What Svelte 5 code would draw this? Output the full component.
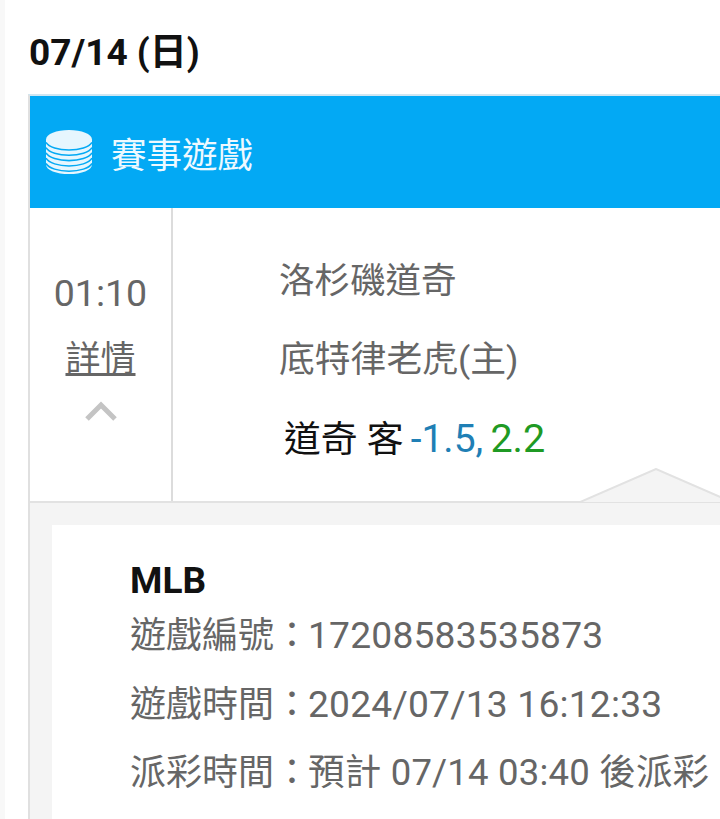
<script>
	const info = [
		{ label: '遊戲編號', value: '17208583535873', wide: true },
		{ label: '遊戲時間', value: '2024/07/13 16:12:33', wide: true },
		{ label: '派彩時間', value: '預計 07/14 03:40 後派彩', wide: false }
	];
</script>

<div class="page">
	<h2 class="date">07/14 (日)</h2>

	<section class="card">
		<header class="card-head">
			<svg class="coins" width="48" height="46" viewBox="0 0 50 48">
				<path d="M1 11C1 5 12 1 25 1s24 4 24 10v26c0 6-11 10-24 10S1 43 1 37z" fill="#e6f6fe" />
				<g fill="none" stroke="#03a9f4" stroke-width="1.6">
					<path d="M1 14c3 5 13 8 24 8s21-3 24-8" />
					<path d="M1 19.500c3 5 13 8 24 8s21-3 24-8" />
					<path d="M1 25c3 5 13 8 24 8s21-3 24-8" />
					<path d="M1 30.500c3 5 13 8 24 8s21-3 24-8" />
					<path d="M1 36c3 5 13 8 24 8s21-3 24-8" />
				</g>
			</svg>
			<span class="card-title">賽事遊戲</span>
		</header>

		<div class="match">
			<div class="side">
				<div class="time">01:10</div>
				<a class="details" href="#details">詳情</a>
				<svg class="chevron" width="32" height="20" viewBox="0 0 32 20">
					<path d="M2 18 16 4l14 14" fill="none" stroke="#c4c4c4" stroke-width="5" />
				</svg>
			</div>
			<div class="teams">
				<div class="team">洛杉磯道奇</div>
				<div class="team name-wide">底特律老虎(主)</div>
				<div class="bet">道奇 客 <span class="line">-1.5,</span> <span class="odds">2.2</span></div>
			</div>
			<svg class="notch" width="152" height="35" viewBox="0 0 152 35">
				<path d="M0 34 76 1l76 33" fill="#f4f4f4" stroke="#e2e2e2" stroke-width="2" />
			</svg>
		</div>

		<div class="panel">
			<div class="panel-body">
				<div class="league">MLB</div>
				{#each info as row}
					<div class="row">{row.label}：<span class:wide={row.wide}>{row.value}</span></div>
				{/each}
			</div>
		</div>
	</section>
</div>

<style>
	:global(body) {
		margin: 0;
		background: #fff;
	}

	.page {
		height: 819px;
		overflow: hidden;
		padding: 29px 0 0 23px;
		border-left: 5px solid #f8f8f8;
		box-sizing: border-box;
		font-family: Roboto, 'Noto Sans CJK TC', sans-serif;
	}

	.date {
		margin: 0 0 17px 1px;
		font-size: 37px;
		line-height: 48px;
		font-weight: 700;
		color: #111;
	}

	.card {
		width: 720px;
		border-left: 2px solid #e0e0e0;
		border-top: 2px solid #cfe6f2;
	}

	.card-head {
		display: flex;
		align-items: center;
		height: 112px;
		padding-left: 15px;
		background: #03a9f4;
	}

	.coins {
		flex: none;
	}

	.card-title {
		margin-left: 18px;
		font-size: 35.500px;
		color: #eef9ff;
	}

	.match {
		position: relative;
		display: flex;
		height: 293px;
		border-bottom: 2px solid #e2e2e2;
	}

	.side {
		display: flex;
		flex-direction: column;
		align-items: center;
		width: 141px;
		flex: none;
		border-right: 2px solid #dcdcdc;
		color: #666;
	}

	.time {
		margin-top: 62px;
		font-size: 37.500px;
		line-height: 46px;
	}

	.details {
		margin-top: 22px;
		font-size: 35px;
		line-height: 44px;
		color: #666;
		text-decoration: underline;
	}

	.chevron {
		margin-top: 19px;
	}

	.teams {
		padding: 50px 0 0 106px;
		font-size: 35.500px;
	}

	.team {
		line-height: 46px;
		margin-bottom: 33px;
		color: #666;
	}

	.name-wide {
		font-size: 35.800px;
	}

	.bet {
		margin: 0 0 0 5px;
		font-size: 36.800px;
		line-height: 46px;
		color: #111;
	}

	.line {
		margin-left: -2px;
		font-size: 39px;
		color: #1f7fb5;
	}

	.odds {
		margin-left: -2px;
		font-size: 39.500px;
		color: #1f9a24;
	}

	.notch {
		position: absolute;
		left: 550px;
		bottom: -2px;
	}

	.panel {
		padding: 22px 0 0 22px;
		background: #f4f4f4;
	}

	.panel-body {
		height: 300px;
		padding: 35px 0 0 78px;
		background: #fff;
	}

	.league {
		font-size: 37px;
		line-height: 42px;
		font-weight: 700;
		color: #111;
	}

	.row {
		font-size: 36px;
		line-height: 67.500px;
		color: #666;
		white-space: nowrap;
	}

	.row span {
		margin-left: -2px;
		letter-spacing: 0.2px;
		font-size: 36.500px;
	}

	.row span.wide {
		font-size: 37.200px;
	}
</style>
